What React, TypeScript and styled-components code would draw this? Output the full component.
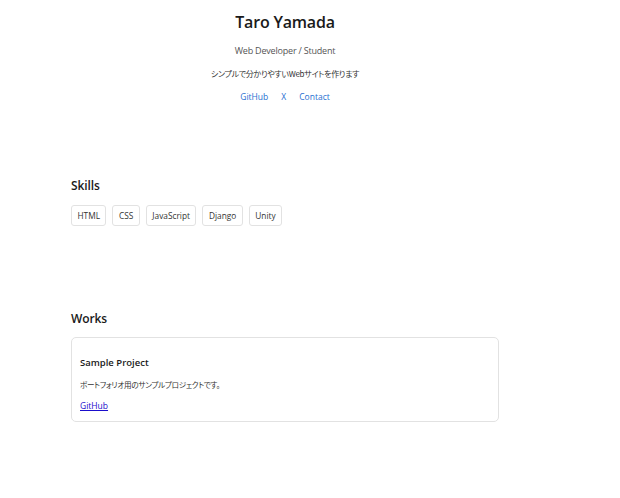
import React from "react";
import styled, { createGlobalStyle } from "styled-components";

const GlobalStyle = createGlobalStyle`
  html, body {
    margin: 0;
    padding: 0;
    background: #ffffff;
  }
  body {
    font-family: "Open Sans", "Noto Sans", "Noto Sans CJK JP", sans-serif;
    color: #222222;
  }
`;

const Page = styled.div`
  width: 570px;
  display: flex;
  flex-direction: column;
`;

const Header = styled.header`
  display: flex;
  flex-direction: column;
  align-items: center;
  padding-top: 10px;
`;

const Name = styled.h1`
  margin: 0;
  font-size: 16px;
  font-weight: 600;
  letter-spacing: -0.2px;
  line-height: 24px;
  color: #1a1a1a;
`;

const Role = styled.p`
  margin: 10px 0 0;
  font-size: 9px;
  letter-spacing: -0.2px;
  line-height: 14px;
  color: #555555;
`;

const Tagline = styled.p`
  margin: 10px 0 0;
  font-family: "Noto Sans CJK JP", sans-serif;
  font-feature-settings: "palt";
  font-size: 8px;
  letter-spacing: -0.3px;
  line-height: 12px;
  color: #333333;
`;

const LinkRow = styled.nav`
  display: flex;
  gap: 13px;
  margin-top: 11px;
`;

const NavLink = styled.a`
  font-size: 8.5px;
  line-height: 12px;
  color: #1f6fd1;
  text-decoration: none;
`;

const Section = styled.section<{ $top: number }>`
  padding: 0 71px;
  margin-top: ${(p) => p.$top}px;
`;

const SectionTitle = styled.h2`
  margin: 0;
  font-size: 12px;
  font-weight: 600;
  letter-spacing: -0.1px;
  line-height: 18px;
  color: #1a1a1a;
`;

const TagList = styled.ul`
  display: flex;
  gap: 6px;
  list-style: none;
  margin: 10px 0 0;
  padding: 0;
`;

const Tag = styled.li`
  height: 21px;
  box-sizing: border-box;
  padding: 0 5.5px;
  display: flex;
  align-items: center;
  border: 1px solid #e2e2e2;
  border-radius: 3px;
  font-size: 8.3px;
  color: #333333;
`;

const Card = styled.article`
  margin-top: 9px;
  border: 1px solid #e2e2e2;
  border-radius: 5px;
  padding: 18px 8px 7px;
`;

const CardTitle = styled.h3`
  margin: 0;
  font-size: 9.5px;
  font-weight: 600;
  line-height: 14px;
  color: #1a1a1a;
`;

const CardText = styled.p`
  margin: 9px 0 0;
  font-family: "Noto Sans CJK JP", sans-serif;
  font-feature-settings: "palt";
  font-size: 7.6px;
  letter-spacing: -0.3px;
  line-height: 12px;
  color: #333333;
`;

const CardLink = styled.a`
  display: inline-block;
  margin-top: 9px;
  font-size: 8.5px;
  line-height: 12px;
  color: #1a0dcc;
  text-decoration: underline;
`;

const skills = ["HTML", "CSS", "JavaScript", "Django", "Unity"];

export default function App() {
  return (
    <>
      <GlobalStyle />
      <Page>
        <Header>
          <Name>Taro Yamada</Name>
          <Role>Web Developer / Student</Role>
          <Tagline>シンプルで分かりやすいWebサイトを作ります</Tagline>
          <LinkRow>
            <NavLink href="#">GitHub</NavLink>
            <NavLink href="#">X</NavLink>
            <NavLink href="#">Contact</NavLink>
          </LinkRow>
        </Header>

        <Section $top={74}>
          <SectionTitle>Skills</SectionTitle>
          <TagList>
            {skills.map((s) => (
              <Tag key={s}>{s}</Tag>
            ))}
          </TagList>
        </Section>

        <Section $top={84}>
          <SectionTitle>Works</SectionTitle>
          <Card>
            <CardTitle>Sample Project</CardTitle>
            <CardText>ポートフォリオ用のサンプルプロジェクトです。</CardText>
            <CardLink href="#">GitHub</CardLink>
          </Card>
        </Section>
      </Page>
    </>
  );
}
